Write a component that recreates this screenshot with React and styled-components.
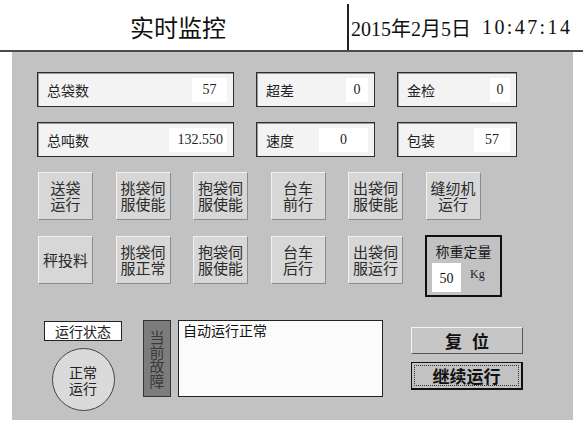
import styled, { createGlobalStyle } from "styled-components";

const GlobalStyle = createGlobalStyle`
  html, body {
    margin: 0;
    padding: 0;
    background: #ffffff;
  }
  body {
    font-family: "Noto Sans CJK SC", "Noto Sans", sans-serif;
    color: #1a1a1a;
  }
`;

const serif = `"Liberation Serif", "Noto Sans CJK SC", serif`;

const infoRows = [
  [
    { label: "总袋数", value: "57", field: 35 },
    { label: "超差", value: "0", field: 22 },
    { label: "金检", value: "0", field: 20 },
  ],
  [
    { label: "总吨数", value: "132.550", field: 58, align: "right" },
    { label: "速度", value: "0", field: 49 },
    { label: "包装", value: "57", field: 36 },
  ],
];

const buttonsTop = [
  ["送袋", "运行"],
  ["挑袋伺", "服使能"],
  ["抱袋伺", "服使能"],
  ["台车", "前行"],
  ["出袋伺", "服使能"],
  ["缝纫机", "运行"],
];

const buttonsBottom = [
  ["秤投料"],
  ["挑袋伺", "服正常"],
  ["抱袋伺", "服使能"],
  ["台车", "后行"],
  ["出袋伺", "服运行"],
];

export default function App() {
  return (
    <Screen>
      <GlobalStyle />
      <Header>
        <Title>实时监控</Title>
        <Separator />
        <Clock>
          <span>2015年2月5日</span>
          <Time>10:47:14</Time>
        </Clock>
      </Header>

      <Panel>
        <InfoGrid>
          {infoRows.flat().map((item) => (
            <InfoBox key={item.label}>
              <InfoLabel>{item.label}</InfoLabel>
              <InfoValue $width={item.field} $align={item.align}>
                {item.value}
              </InfoValue>
            </InfoBox>
          ))}
        </InfoGrid>

        <ButtonRow>
          {buttonsTop.map((lines, i) => (
            <ToggleButton key={i}>
              {lines.map((l) => (
                <ButtonLine key={l}>{l}</ButtonLine>
              ))}
            </ToggleButton>
          ))}
        </ButtonRow>

        <ButtonRow $second>
          {buttonsBottom.map((lines, i) => (
            <ToggleButton key={i}>
              {lines.map((l) => (
                <ButtonLine key={l}>{l}</ButtonLine>
              ))}
            </ToggleButton>
          ))}
          <WeightBox>
            <WeightTitle>称重定量</WeightTitle>
            <WeightLine>
              <WeightInput>50</WeightInput>
              <Unit>Kg</Unit>
            </WeightLine>
          </WeightBox>
        </ButtonRow>

        <BottomRow>
          <StatusColumn>
            <StatusLabel>运行状态</StatusLabel>
            <StatusLamp>
              <ButtonLine>正常</ButtonLine>
              <ButtonLine>运行</ButtonLine>
            </StatusLamp>
          </StatusColumn>

          <FaultTag>
            <span>当前故障</span>
          </FaultTag>

          <FaultText>自动运行正常</FaultText>

          <ActionColumn>
            <ResetButton>复 位</ResetButton>
            <ContinueButton>
              <span>继续运行</span>
            </ContinueButton>
          </ActionColumn>
        </BottomRow>
      </Panel>
    </Screen>
  );
}

// styles

const Screen = styled.div`
  width: 583px;
  height: 429px;
  overflow: hidden;
  background: #ffffff;
`;

const Header = styled.header`
  height: 50px;
  display: flex;
  align-items: stretch;
  border-bottom: 2px solid #4a4a4a;
  box-sizing: content-box;
`;

const Title = styled.h1`
  width: 347px;
  margin: 0;
  padding-left: 9px;
  padding-top: 2px;
  box-sizing: border-box;
  display: flex;
  align-items: center;
  justify-content: center;
  font-size: 24px;
  font-weight: 400;
  color: #111;
`;

const Separator = styled.div`
  width: 2px;
  margin-top: 4px;
  background: #222;
`;

const Clock = styled.div`
  display: flex;
  align-items: center;
  padding-left: 2px;
  padding-top: 4px;
  font-family: ${serif};
  font-size: 20px;
  color: #111;
  white-space: nowrap;
`;

const Time = styled.span`
  margin-left: 11px;
  letter-spacing: 2.4px;
`;

const Panel = styled.main`
  width: 561px;
  height: 368px;
  margin-left: 12px;
  padding: 20px 0 0 25px;
  box-sizing: border-box;
  background: #c2c2c2;
`;

const InfoGrid = styled.div`
  display: grid;
  grid-template-columns: 197px 119px 120px;
  grid-auto-rows: 35px;
  column-gap: 22px;
  row-gap: 15px;
`;

const InfoBox = styled.div`
  display: flex;
  align-items: center;
  justify-content: space-between;
  padding: 0 6px 0 9px;
  background: #f3f3f3;
  border: 1px solid #2e2e2e;
  box-shadow: inset 1px 1px 0 #9a9a9a;
`;

const InfoLabel = styled.span`
  font-size: 14px;
  color: #222;
`;

const InfoValue = styled.span`
  width: ${(p) => p.$width}px;
  height: 24px;
  display: flex;
  align-items: center;
  justify-content: ${(p) => (p.$align === "right" ? "flex-end" : "center")};
  padding-right: ${(p) => (p.$align === "right" ? "4px" : "0")};
  box-sizing: border-box;
  background: #ffffff;
  font-family: ${serif};
  font-size: 14px;
  color: #222;
`;

const ButtonRow = styled.div`
  display: flex;
  align-items: flex-start;
  gap: 22.5px;
  margin-left: 1px;
  margin-top: ${(p) => (p.$second ? "16px" : "15px")};
`;

const ToggleButton = styled.button`
  width: 55px;
  height: 48px;
  padding: 0;
  display: flex;
  flex-direction: column;
  align-items: center;
  justify-content: center;
  background: #d7d7d7;
  border: 1px solid;
  border-color: #f2f2f2 #8c8c8c #8c8c8c #f2f2f2;
  font-family: "Noto Sans CJK SC", sans-serif;
  font-size: 15px;
  color: #2a2a2a;
  white-space: nowrap;
`;

const ButtonLine = styled.span`
  display: block;
  height: 16px;
  line-height: 16px;
`;

const WeightBox = styled.div`
  width: 77px;
  height: 62px;
  margin-top: -1px;
  margin-left: -0.5px;
  box-sizing: border-box;
  border: 2px solid #111;
  padding: 6px 0 0 5px;
  display: flex;
  flex-direction: column;
`;

const WeightTitle = styled.div`
  font-size: 14px;
  line-height: 16px;
  text-align: center;
  padding-right: 5px;
  color: #1a1a1a;
`;

const WeightLine = styled.div`
  display: flex;
  align-items: flex-start;
  gap: 9px;
  margin-top: 4px;
`;

const WeightInput = styled.div`
  width: 29px;
  height: 29px;
  background: #fff;
  display: flex;
  align-items: center;
  justify-content: center;
  padding-top: 3px;
  box-sizing: border-box;
  font-family: ${serif};
  font-size: 14px;
  color: #111;
`;

const Unit = styled.span`
  font-family: ${serif};
  font-size: 12px;
  margin-top: 4px;
  color: #222;
`;

const BottomRow = styled.div`
  display: flex;
  align-items: flex-start;
  margin-top: 23px;
`;

const StatusColumn = styled.div`
  width: 78px;
  margin-left: 7px;
  margin-top: 1px;
  display: flex;
  flex-direction: column;
  align-items: center;
  gap: 7px;
`;

const StatusLabel = styled.div`
  width: 78px;
  height: 20px;
  box-sizing: border-box;
  background: #fff;
  border: 1px solid #222;
  display: flex;
  align-items: center;
  justify-content: center;
  font-size: 14px;
  color: #222;
`;

const StatusLamp = styled.div`
  width: 63px;
  height: 63px;
  border-radius: 50%;
  box-sizing: border-box;
  border: 1px solid #444;
  background: #dadada;
  display: flex;
  flex-direction: column;
  align-items: center;
  justify-content: center;
  font-size: 14px;
  color: #222;
`;

const FaultTag = styled.div`
  width: 28px;
  height: 77px;
  margin-left: 21px;
  box-sizing: border-box;
  background: #7c7c7c;
  border: 1px solid #333;
  display: flex;
  align-items: center;
  justify-content: center;
  font-size: 15px;
  color: #3a3a3a;

  span {
    writing-mode: vertical-rl;
    text-orientation: upright;
    letter-spacing: -0.5px;
    line-height: 15px;
  }
`;

const FaultText = styled.div`
  width: 205px;
  height: 77px;
  margin-left: 7px;
  box-sizing: border-box;
  background: #fbfbfb;
  border: 1px solid #222;
  padding: 0 0 0 4px;
  font-size: 14px;
  line-height: 18px;
  color: #111;
`;

const ActionColumn = styled.div`
  margin-left: 28px;
  margin-top: 7px;
  display: flex;
  flex-direction: column;
  gap: 8px;
`;

const ResetButton = styled.button`
  width: 112px;
  height: 27px;
  padding: 0;
  background: #c6c6c6;
  border: 1px solid;
  border-color: #f5f5f5 #555 #555 #f5f5f5;
  font-family: "Noto Sans CJK SC", sans-serif;
  font-size: 17px;
  font-weight: 700;
  word-spacing: 6px;
  color: #111;
`;

const ContinueButton = styled.button`
  width: 112px;
  height: 28px;
  padding: 2px;
  background: #c2c2c2;
  border: 1px solid #111;
  border-bottom-width: 2px;
  border-right-width: 2px;
  font-family: "Noto Sans CJK SC", sans-serif;
  font-size: 17px;
  font-weight: 700;
  color: #111;

  span {
    display: flex;
    align-items: center;
    justify-content: center;
    height: 100%;
    border: 1px dotted #333;
    box-sizing: border-box;
  }
`;
